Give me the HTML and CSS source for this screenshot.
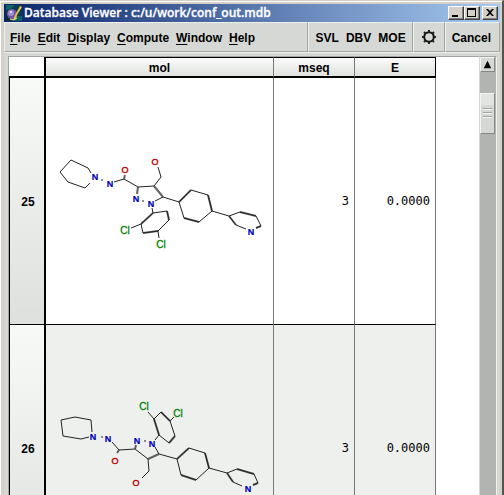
FILE: index.html
```
<!DOCTYPE html>
<html lang="en">
<head>
<meta charset="utf-8">
<title>Database Viewer : c:/u/work/conf_out.mdb</title>
<link rel="stylesheet" href="styles.css">
</head>
<body>
<div class="window">
  <header class="titlebar">
    <svg class="app-icon" viewBox="0 0 16 16" aria-hidden="true">
      <rect width="16" height="16" fill="#0a3c4c"/>
      <path d="M0 0H9L5 4L0 5ZM10 11H16V16H9Z" fill="#0d6468"/>
      <path d="M0 9L4 16H0Z" fill="#062838"/>
      <circle cx="6" cy="9" r="5" fill="#6f55a8"/>
      <circle cx="5" cy="8" r="3" fill="#a58bd2"/>
      <circle cx="5" cy="7" r="1" fill="#f3eaff"/>
      <path d="M14 1L9 10L7 15L10 14L11 10L16 2Z" fill="#e8c14e"/>
      <path d="M4 14L8 15L11 13" stroke="#f7df86" fill="none"/>
    </svg>
    <h1 class="title">Database Viewer : c:/u/work/conf_out.mdb</h1>
    <div class="window-buttons">
      <button class="win-btn" aria-label="Minimize"><svg viewBox="0 0 14 12"><path d="M3 8H9V10H3Z"/></svg></button>
      <button class="win-btn" aria-label="Maximize"><svg viewBox="0 0 14 12"><path d="M2 1H11V10H2ZM3 3V9H10V3Z" fill-rule="evenodd"/></svg></button>
      <button class="win-btn close" aria-label="Close"><svg viewBox="0 0 14 12"><path d="M3 2H5L7 4L9 2H11L8 5.500L11 9H9L7 7L5 9H3L6 5.500Z"/></svg></button>
    </div>
  </header>
  <nav class="menubar">
    <div class="group menus">
      <button><u>F</u>ile</button>
      <button><u>E</u>dit</button>
      <button><u>D</u>isplay</button>
      <button><u>C</u>ompute</button>
      <button><u>W</u>indow</button>
      <button><u>H</u>elp</button>
    </div>
    <div class="group tools">
      <button>SVL</button>
      <button>DBV</button>
      <button>MOE</button>
    </div>
    <div class="group gear">
      <button aria-label="Settings">
        <svg viewBox="0 0 16 16"><circle cx="8" cy="8" r="4.800" fill="none" stroke="#111" stroke-width="2"/><g stroke="#222" stroke-width="2"><path d="M8 1V3M8 13V15M1 8H3M13 8H15M3 3L4.500 4.500M13 3L11.500 4.500M3 13L4.500 11.500M13 13L11.500 11.500"/></g></svg>
      </button>
    </div>
    <div class="group cancel"><button>Cancel</button></div>
  </nav>
  <main class="content">
    <div class="sheet">
      <table>
        <colgroup><col class="c-num"><col class="c-mol"><col class="c-mseq"><col class="c-e"></colgroup>
        <thead>
          <tr><td class="corner"></td><th scope="col">mol</th><th scope="col">mseq</th><th scope="col">E</th></tr>
        </thead>
        <tbody>
          <tr>
            <th scope="row">25</th>
            <td class="mol">
              <svg class="molecule" viewBox="46 78 227 246" role="img" aria-label="Molecule 25">
                <path class="bond" d="M91 173L88 168L71 160L60 172L68 182L85 188L90 183M101 180H103M114 182L124 179L138 187L154 186L161 177L158 167M142 201H144M155 201L163 197L179 202L191 190L208 195L212 211L199 222L184 218L179 202M152 208L153 213L167 211L169 220L158 231L143 233L141 224L153 213M131 228L141 224M158 231L159 238M212 211L229 216L240 212L256 216L261 226L256 228M246 229L236 225L229 216"/>
                <path class="bond double" d="M124 179L125 175M138 187L137 194M154 186L163 197M179 202L191 190M208 195L212 211M199 222L184 218M167 211L169 220M158 231L143 233M153 213L141 224M240 212L256 216M229 216L236 225M261 226L256 228"/>
                <g class="n"><text x="95" y="180">N</text><text x="110" y="187">N</text><text x="136" y="202">N</text><text x="151" y="207">N</text><text x="251" y="235">N</text></g>
                <g class="o"><text x="125" y="173">O</text><text x="155" y="165">O</text></g>
                <g class="cl"><text x="125" y="234">Cl</text><text x="161" y="248">Cl</text></g>
              </svg>
            </td>
            <td class="value">3</td>
            <td class="value">0.0000</td>
          </tr>
          <tr>
            <th scope="row">26</th>
            <td class="mol">
              <svg class="molecule" viewBox="46 325 227 246" role="img" aria-label="Molecule 26">
                <path class="bond" d="M92 432L91 420L75 417L61 420L63 436L81 439L89 437M101 437H103M112 442L119 450L135 449L148 459L149 471L142 478M144 441H146M155 447L159 454L177 459L189 448L205 453L209 468L196 480L181 475L177 459M155 440L159 435L154 419L161 412L170 421L175 436L169 443L159 435M148 412L154 419M170 421L174 417M209 468L227 473L237 469L254 474L258 483L253 485M242 486L233 482L227 473"/>
                <path class="bond double" d="M119 450L117 453M135 449L136 445M148 459L159 454M177 459L189 448M205 453L209 468M196 480L181 475M159 435L154 419M161 412L170 421M175 436L169 443M237 469L254 474M227 473L233 482M258 483L253 485"/>
                <g class="n"><text x="93" y="440">N</text><text x="108" y="442">N</text><text x="137" y="444">N</text><text x="152" y="447">N</text><text x="248" y="492">N</text></g>
                <g class="o"><text x="115" y="464">O</text><text x="136" y="486">O</text></g>
                <g class="cl"><text x="144" y="410">Cl</text><text x="178" y="417">Cl</text></g>
              </svg>
            </td>
            <td class="value">3</td>
            <td class="value">0.0000</td>
          </tr>
        </tbody>
      </table>
    </div>
    <div class="scrollbar">
      <button class="scroll-up" aria-label="Scroll up"><svg viewBox="0 0 14 14"><path d="M7 3L11 11H3Z"/></svg></button>
      <div class="thumb"><i></i><i></i><i></i></div>
    </div>
  </main>
</div>
</body>
</html>
```
FILE: styles.css
```
* { box-sizing: border-box; }

body {
  margin: 0;
  height: 100vh;
  overflow: hidden;
  background: #d4d0c8;
  color: #000;
  font-family: "Liberation Sans", Arial, sans-serif;
  font-size: 12px;
}

button {
  margin: 0;
  padding: 0;
  border: 0;
  background: none;
  color: inherit;
  font: inherit;
}

.window {
  display: flex;
  flex-direction: column;
  height: 100vh;
  padding: 3px 2px 0 3px;
  border-top: 1px solid #d4d0c8;
  border-right: 2px solid #55554f;
  box-shadow: inset 1px 1px #fff;
}

.titlebar {
  display: flex;
  flex: none;
  align-items: center;
  height: 18px;
  margin: 0 0 0 1px;
  padding: 0 2px;
  background: linear-gradient(90deg, #0a246a, #a6caf0);
}

.app-icon { width: 16px; height: 16px; }

.title {
  flex: 1;
  margin: 0 0 0 2px;
  color: #fff;
  font: 600 12px/18px "Open Sans", "Noto Sans", sans-serif;
  -webkit-text-stroke: 0.3px #fff;
  white-space: nowrap;
}

.window-buttons { display: flex; }

.win-btn {
  display: flex;
  width: 16px;
  height: 14px;
  border: 1px solid;
  border-color: #fff #404040 #404040 #fff;
  background: #d4d0c8;
  box-shadow: inset -1px -1px #808080;
}

.win-btn svg { width: 14px; height: 12px; }
.win-btn.close { margin-left: 2px; }

.menubar {
  display: flex;
  flex: none;
  height: 30px;
  margin-left: 1px;
  background: #d5d8d5;
  font-weight: bold;
}

.group {
  display: flex;
  align-items: center;
  padding-top: 2px;
  border: 1px solid;
  border-color: #eef0ee #a2a5a2 #a2a5a2 #eef0ee;
}

.menus { flex: 1; gap: 7px; padding-left: 5px; }
.menus u { text-underline-offset: 2px; }
.tools { gap: 7px; padding-right: 6px; padding-left: 7px; }
.gear { padding: 0 7px; }
.gear button, .gear svg { display: block; width: 16px; height: 16px; }
.cancel { padding-right: 8px; padding-left: 6px; }

.content {
  display: flex;
  flex: 1;
  min-height: 0;
  margin-left: 1px;
  padding: 3px 3px 0 4px;
  background: #d5d8d5;
  border-top: 1px solid #eef0ee;
}

.sheet {
  flex: 1;
  overflow: hidden;
  background: #fefffe;
  border: solid #a2a5a2;
  border-width: 1px 0 0 1px;
}

table {
  width: 427px;
  border-collapse: separate;
  border-spacing: 0;
  table-layout: fixed;
}

.c-num { width: 37px; }
.c-mol { width: 228px; }
.c-mseq { width: 81px; }
.c-e { width: 81px; }

td, th { padding: 0; }

thead th {
  height: 21px;
  padding-top: 1px;
  border: solid #000;
  border-width: 1px 1px 2px 0;
  border-right-color: #777a77;
  background: linear-gradient(#fafbfa, #dfe2df);
}

thead th:last-child { border-right-color: #000; }
.corner { border-right: 2px solid #000; border-bottom: 2px solid #000; }

tbody td, tbody th { height: 247px; border-bottom: 1px solid #000; }

tbody th {
  padding-top: 2px;
  padding-left: 2px;
  border-left: 1px solid #000;
  border-right: 2px solid #000;
  background: linear-gradient(#f8faf8, #dde0dd);
}

tbody td { border-right: 1px solid #777a77; }
tbody tr:nth-child(even) td { background: #eef0ee; }

.value {
  padding-right: 5px;
  font-family: "DejaVu Sans Mono", monospace;
  font-size: 12px;
  text-align: right;
}

.molecule { display: block; width: 227px; height: 246px; }
.bond { fill: none; stroke: #222; stroke-width: 1; }
.bond.double { stroke-width: 2; opacity: 0.7; }
.molecule text { font-size: 9px; text-anchor: middle; }
.n { fill: #0000b8; stroke: #0000b8; stroke-width: 0.2; font-weight: bold; }
.o { fill: #b80000; stroke: #b80000; stroke-width: 0.4; }
.cl { fill: #008000; stroke: #008000; stroke-width: 0.3; }
.molecule .cl text { font-size: 10px; }

.scrollbar {
  flex: none;
  width: 18px;
  border: solid;
  border-width: 1px 1px 0 1px;
  border-color: #a2a5a2 #eef0ee #a2a5a2 #d5d8d5;
  background: #b1b4b1;
}

.scroll-up, .thumb {
  display: block;
  width: 15px;
  border: 1px solid;
  border-color: #f2f4f2 #858885 #858885 #f2f4f2;
  background: #d5d8d5;
}

.scroll-up { height: 15px; }
.scroll-up svg { display: block; width: 13px; height: 13px; }

.thumb {
  display: flex;
  flex-direction: column;
  align-items: center;
  gap: 2px;
  height: 41px;
  margin-top: 21px;
  padding-top: 14px;
  background: linear-gradient(#e2e4e2 0 11px, #d5d8d5 11px);
}

.thumb i {
  width: 9px;
  height: 2px;
  border-top: 1px solid #a2a5a2;
  border-bottom: 1px solid #f2f4f2;
}
```
